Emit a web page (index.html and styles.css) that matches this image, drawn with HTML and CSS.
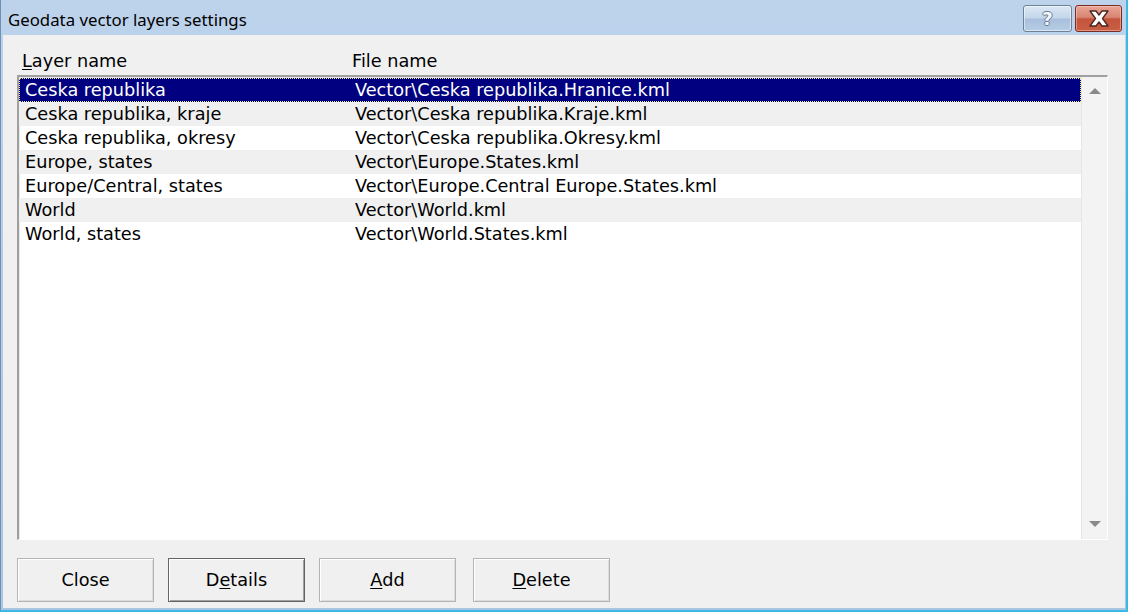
FILE: index.html
```html
<!DOCTYPE html>
<html>
<head>
<meta charset="utf-8">
<link rel="stylesheet" href="styles.css">
</head>
<body>
<div class="window">
  <div class="titlebar">
    <div class="title">Geodata vector layers settings</div>
    <div class="caption-buttons">
      <div class="cbtn help"><span class="qmark">?</span></div>
      <div class="cbtn close">
        <svg width="24" height="19" viewBox="0 0 24 19">
          <path d="M3 2 L9 2 L12 6 L15 2 L21 2 L15.5 9.5 L21 17 L15 17 L12 13 L9 17 L3 17 L8.5 9.5 Z" fill="#ffffff" stroke="#4e2620" stroke-width="1.3" stroke-linejoin="round"/>
        </svg>
      </div>
    </div>
  </div>
  <div class="client">
    <div class="headers">
      <div class="col1"><u>L</u>ayer name</div>
      <div class="col2">File name</div>
    </div>
    <div class="listbox">
      <div class="rows">
        <div class="row selected"><div class="c1">Ceska republika</div><div class="c2">Vector\Ceska republika.Hranice.kml</div></div>
        <div class="row alt"><div class="c1">Ceska republika, kraje</div><div class="c2">Vector\Ceska republika.Kraje.kml</div></div>
        <div class="row"><div class="c1">Ceska republika, okresy</div><div class="c2">Vector\Ceska republika.Okresy.kml</div></div>
        <div class="row alt"><div class="c1">Europe, states</div><div class="c2">Vector\Europe.States.kml</div></div>
        <div class="row"><div class="c1">Europe/Central, states</div><div class="c2">Vector\Europe.Central Europe.States.kml</div></div>
        <div class="row alt"><div class="c1">World</div><div class="c2">Vector\World.kml</div></div>
        <div class="row"><div class="c1">World, states</div><div class="c2">Vector\World.States.kml</div></div>
      </div>
      <div class="scrollbar">
        <div class="arrow up"></div>
        <div class="arrow down"></div>
      </div>
    </div>
    <div class="buttons">
      <div class="btn">Close</div>
      <div class="btn default">D<u>e</u>tails</div>
      <div class="btn"><u>A</u>dd</div>
      <div class="btn wide-gap"><u>D</u>elete</div>
    </div>
  </div>
</div>
</body>
</html>
```

FILE: styles.css
```css
html, body {
  margin: 0;
  padding: 0;
  background: #ffffff;
}

.window {
  width: 1128px;
  height: 612px;
  box-sizing: border-box;
  display: flex;
  flex-direction: column;
  background: linear-gradient(#bdd3ec, #aac5e3);
  border-left: 1px solid #6f8fb4;
  border-right: 2px solid #3cb8e6;
  border-bottom: 2px solid #3cb8e6;
  font-family: "DejaVu Sans", sans-serif;
  color: #000;
}

.titlebar {
  height: 35px;
  flex: none;
  display: flex;
  align-items: center;
  justify-content: space-between;
  padding-left: 7px;
  padding-right: 4px;
}

.title {
  font-family: "Noto Sans", "Open Sans", sans-serif;
  font-size: 16.8px;
  color: #000;
  padding-top: 3px;
}

.caption-buttons {
  display: flex;
  gap: 3px;
  align-self: flex-start;
  margin-top: 5px;
}

.cbtn {
  height: 27px;
  box-sizing: border-box;
  border-radius: 3px;
  display: flex;
  align-items: center;
  justify-content: center;
}

.help {
  width: 49px;
  border: 1px solid #6f8197;
  background: linear-gradient(#dbe7f4 0%, #c4d6ea 48%, #a8c0dc 52%, #b6cde6 100%);
  box-shadow: inset 0 0 0 1px rgba(255,255,255,0.5);
}

.qmark {
  font-family: "DejaVu Sans", sans-serif;
  font-weight: bold;
  font-size: 18px;
  color: #f4f7fb;
  text-shadow: 1px 0 0 #6a7c92, -1px 0 0 #6a7c92, 0 1px 0 #6a7c92, 0 -1px 0 #6a7c92;
}

.close {
  width: 47px;
  border: 1px solid #7a2c22;
  background: linear-gradient(#e8a596 0%, #d98573 45%, #c4553c 52%, #c95e45 100%);
  box-shadow: inset 0 0 0 1px rgba(255,220,210,0.45);
}

.client {
  flex: 1;
  margin: 0 1px 2px 2px;
  background: #f0f0f0;
  display: flex;
  flex-direction: column;
  padding: 0 17px 0 14px;
}

.headers {
  display: flex;
  height: 40px;
  align-items: flex-end;
  padding-bottom: 4px;
  box-sizing: border-box;
  font-size: 17.7px;
}

.headers .col1 {
  width: 330px;
  padding-left: 5px;
}

.listbox {
  height: 465px;
  box-sizing: border-box;
  border-top: 2px solid #a0a0a0;
  border-left: 2px solid #a0a0a0;
  border-right: 1px solid #ffffff;
  border-bottom: 1px solid #ffffff;
  box-shadow: inset 1px 1px 0 #e6e6e6;
  background: #ffffff;
  display: flex;
  padding: 1px 0 0 0;
}

.rows {
  flex: 1;
  display: flex;
  flex-direction: column;
}

.row {
  height: 24px;
  display: flex;
  align-items: center;
  font-size: 17.7px;
  box-sizing: border-box;
  padding-left: 5px;
  border: 1px solid transparent;
  white-space: nowrap;
}

.row.alt {
  background: #f0f0f0;
}

.row.selected {
  background: #000080;
  color: #ffffff;
  border: 1px dotted #f4eb8a;
}

.row .c1 {
  width: 330px;
}

.scrollbar {
  width: 26px;
  flex: none;
  background: #f3f3f3;
  border-left: 1px solid #e6e6e6;
  display: flex;
  flex-direction: column;
  justify-content: space-between;
  align-items: center;
  padding: 11px 0 12px 0;
  box-sizing: border-box;
  margin-top: -1px;
}

.arrow {
  width: 0;
  height: 0;
  border-left: 6px solid transparent;
  border-right: 6px solid transparent;
}

.arrow.up {
  border-bottom: 6px solid #8a8a8a;
}

.arrow.down {
  border-top: 6px solid #8a8a8a;
}

.buttons {
  display: flex;
  gap: 14px;
  margin-top: 18px;
}

.btn {
  width: 137px;
  height: 44px;
  box-sizing: border-box;
  display: flex;
  align-items: center;
  justify-content: center;
  font-size: 17.7px;
  background: #f0f0f0;
  border-top: 1px solid #e3e3e3;
  border-left: 1px solid #e3e3e3;
  border-right: 1px solid #a0a0a0;
  border-bottom: 1px solid #a0a0a0;
  box-shadow: inset 1px 1px 0 #ffffff, inset -1px -1px 0 #dcdcdc;
  outline: 1px solid #b4b4b4;
  outline-offset: -1px;
}

.btn.default {
  border: 1px solid #646464;
  outline: none;
  box-shadow: inset 1px 1px 0 #ffffff, inset -1px -1px 0 #a0a0a0;
}

.btn.wide-gap {
  margin-left: 3px;
}

u {
  text-decoration: underline;
  text-underline-offset: 2px;
}
```
